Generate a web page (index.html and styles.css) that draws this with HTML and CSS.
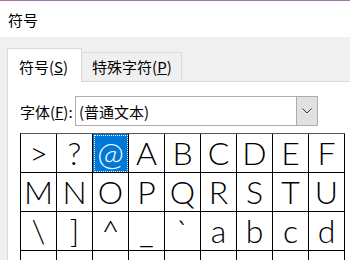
FILE: index.html
```html
<!DOCTYPE html>
<html lang="zh-CN">
<head>
    <meta charset="UTF-8">
    <meta name="viewport" content="width=device-width, initial-scale=1.0">
    <title>符号</title>
    <link rel="stylesheet" href="styles.css">
</head>
<body>
    <div class="titlebar">符号</div>

    <div class="dialog">
        <div class="tabs">
            <div class="tab active">符号(<u>S</u>)</div>
            <div class="tab">特殊字符(<u>P</u>)</div>
        </div>

        <div class="panel">
            <div class="font-row">
                <span class="label">字体(<u>F</u>):</span>
                <div class="combo">
                    <span class="combo-text">(普通文本)</span>
                    <span class="combo-btn">
                        <svg width="10" height="6" viewBox="0 0 10 6"><path d="M0.5 0.5 L5 5 L9.5 0.5" fill="none" stroke="#333" stroke-width="1"/></svg>
                    </span>
                </div>
            </div>

            <div class="symbols">
                <div class="cell">&gt;</div>
                <div class="cell">?</div>
                <div class="cell selected"><span>@</span></div>
                <div class="cell">A</div>
                <div class="cell">B</div>
                <div class="cell">C</div>
                <div class="cell">D</div>
                <div class="cell">E</div>
                <div class="cell">F</div>

                <div class="cell">M</div>
                <div class="cell">N</div>
                <div class="cell">O</div>
                <div class="cell">P</div>
                <div class="cell">Q</div>
                <div class="cell">R</div>
                <div class="cell">S</div>
                <div class="cell">T</div>
                <div class="cell">U</div>

                <div class="cell">\</div>
                <div class="cell">]</div>
                <div class="cell">^</div>
                <div class="cell">_</div>
                <div class="cell">`</div>
                <div class="cell">a</div>
                <div class="cell">b</div>
                <div class="cell">c</div>
                <div class="cell">d</div>

                <!-- next row is cut off by the window edge -->
                <div class="cell"></div>
                <div class="cell"></div>
                <div class="cell"></div>
                <div class="cell"></div>
                <div class="cell"></div>
                <div class="cell"></div>
                <div class="cell"></div>
                <div class="cell"></div>
                <div class="cell"></div>
            </div>
        </div>
    </div>
</body>
</html>
```

FILE: styles.css
```css
body {
    font-family: "Noto Sans CJK SC", "Liberation Sans", sans-serif;
    font-size: 15px;
    color: #000000;
    background-color: #f0f0f0;
    width: 350px;
    height: 260px;
    margin: 0;
    overflow: hidden;
}
.titlebar {
    height: 36px;
    border-top: 1px solid #a07aa6;
    background-color: #ffffff;
    padding-left: 8px;
    line-height: 38px;
}
.dialog {
    padding: 11px 0 0 7px;
}
.tabs {
    display: flex;
    align-items: flex-end;
    position: relative;
    z-index: 1;
}
.tab {
    height: 28px;
    line-height: 28px;
    padding: 0 9px 0 10px;
    border: 1px solid #d9d9d9;
    border-bottom: none;
    border-left: none;
    background-color: #f0f0f0;
}
.tab.active {
    height: 33px;
    line-height: 36px;
    padding: 0 13px 0 11px;
    border-left: 1px solid #d9d9d9;
    background-color: #ffffff;
    margin-bottom: -1px;
}
.panel {
    background-color: #ffffff;
    border-top: 1px solid #d9d9d9;
    border-left: 1px solid #d9d9d9;
    height: 200px;
    padding: 14px 0 0 12px;
}
.font-row {
    display: flex;
    align-items: center;
    height: 30px;
}
.label {
    width: 55px;
}
.combo {
    display: flex;
    align-items: center;
    width: 241px;
    height: 28px;
    border: 1px solid #adadad;
    background-color: #ffffff;
}
.combo-text {
    flex: 1;
    padding-left: 3px;
}
.combo-btn {
    width: 20px;
    height: 28px;
    display: flex;
    align-items: center;
    justify-content: center;
    background-color: #e1e1e1;
    border-left: 1px solid #adadad;
}
.symbols {
    display: grid;
    grid-template-columns: repeat(9, 36px);
    grid-auto-rows: 39px;
    margin-top: 7px;
    border-top: 1px solid #555555;
    border-left: 1px solid #000000;
    width: max-content;
    font-family: "Lato", "Open Sans", sans-serif;
    font-weight: 300;
    font-size: 32px;
}
.cell {
    display: flex;
    align-items: center;
    justify-content: center;
    border-right: 1px solid #000000;
    border-bottom: 1px solid #000000;
    line-height: 1;
}
.cell.selected {
    background-color: #0078d7;
    color: #ffffff;
    outline: 1px dotted #ffffff;
    outline-offset: -2px;
}
```
